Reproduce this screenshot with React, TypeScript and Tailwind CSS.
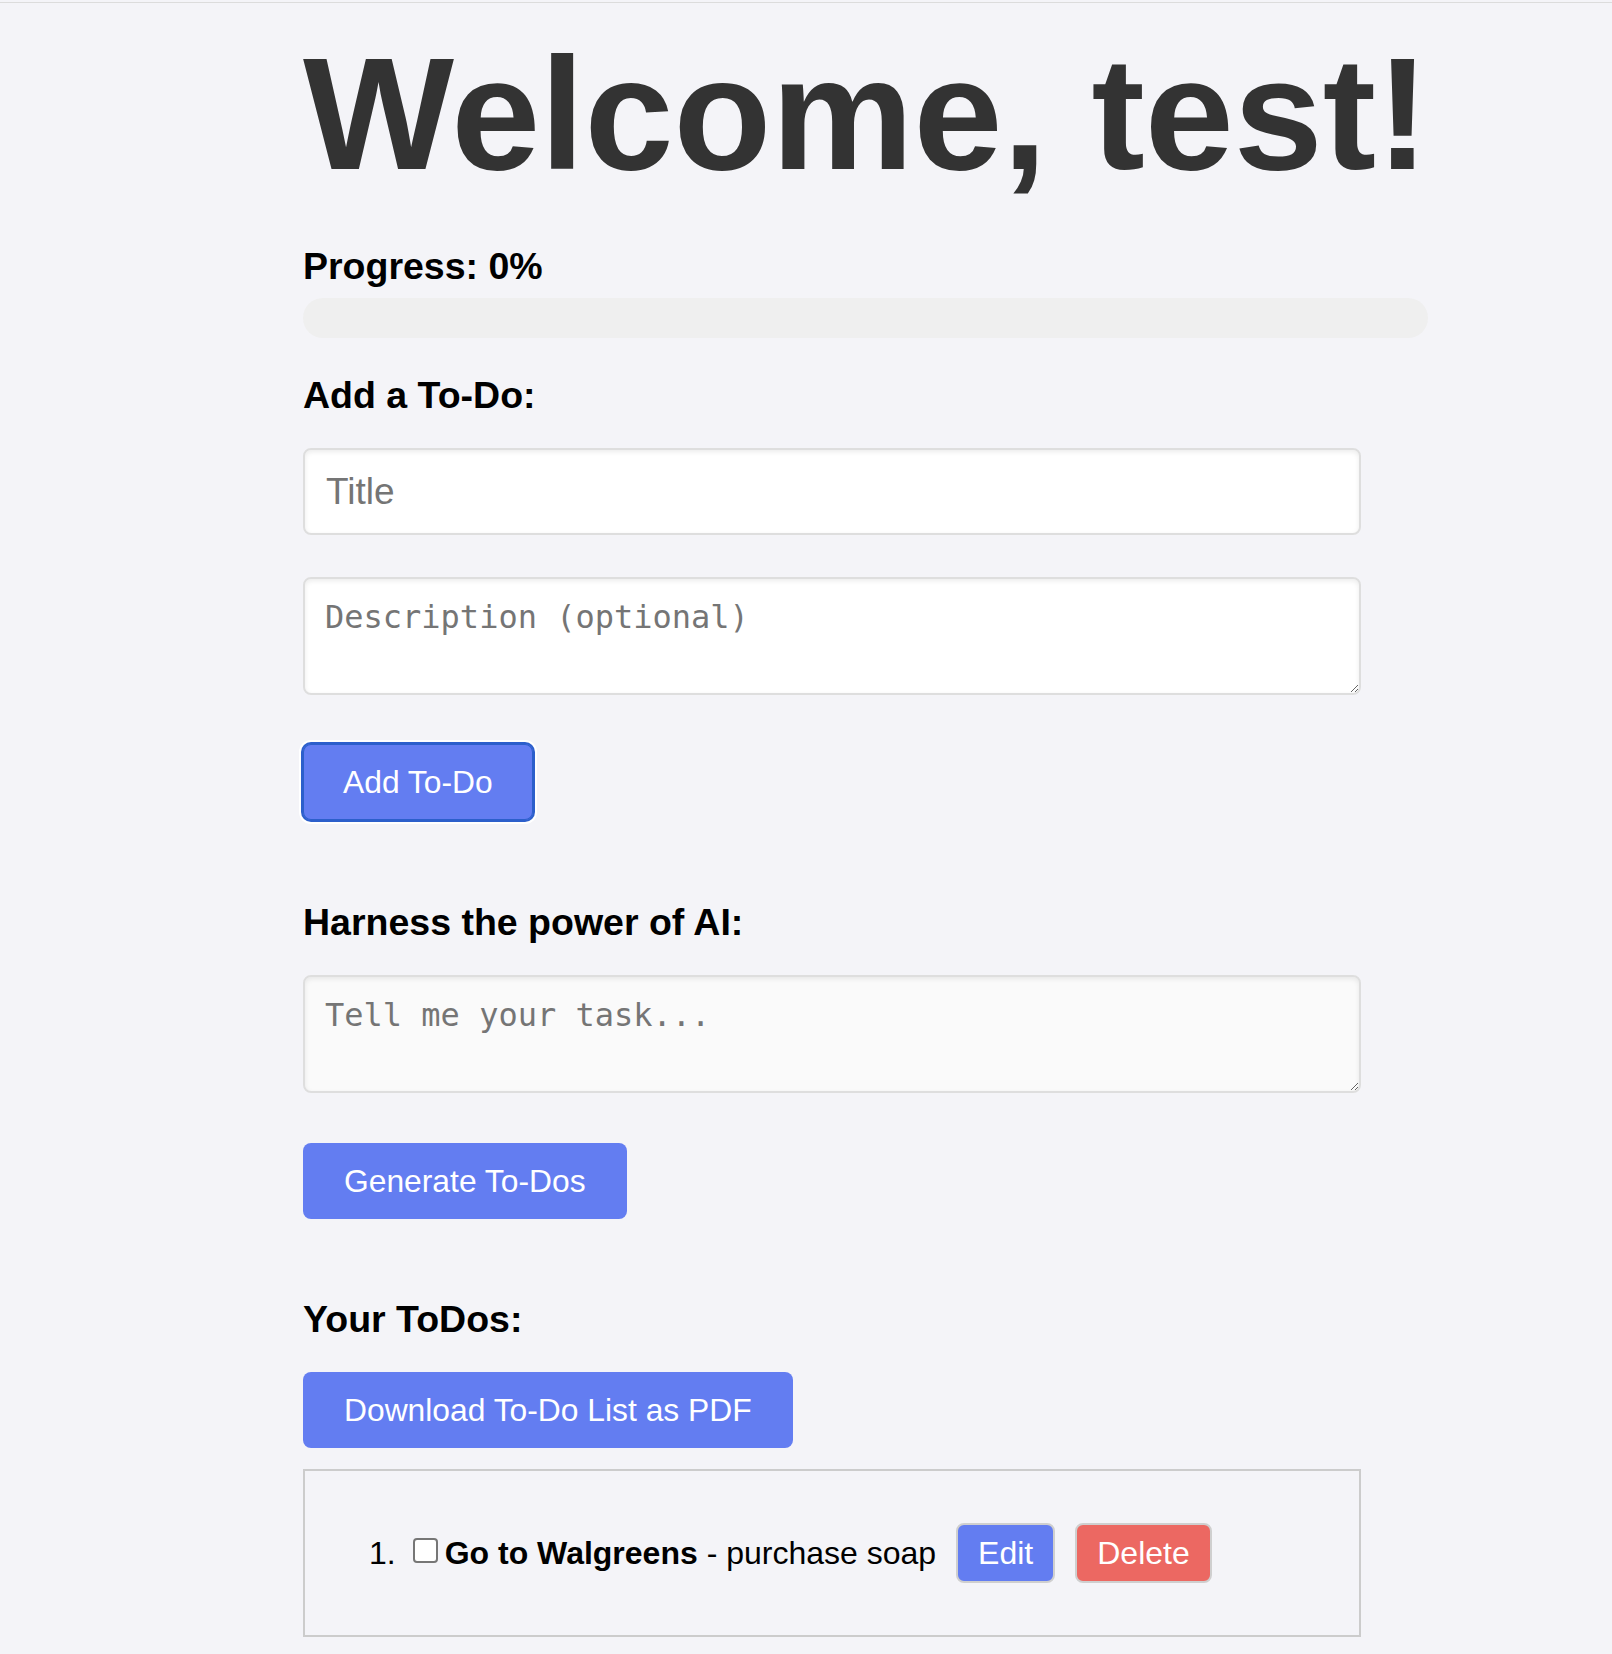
import React from "react";

export default function App() {
  return (
    <div className="min-h-[1654px] bg-[#f4f4f8] text-black [font-family:'Liberation_Sans',Arial,sans-serif]">
      <div className="h-[3px] border-b border-[#dcdcdc] bg-[#f4f4f8]" />
      <div className="mx-auto w-[1006px] pt-[31px]">
        <h1 className="whitespace-nowrap text-[160px] font-bold leading-[160px] text-[#333333]">
          Welcome, test!
        </h1>

        <h2 className="mt-[50px] text-[37.5px] font-bold leading-[44px]">Progress: 0%</h2>
        <div className="mt-[10px] h-[40px] w-[1125px] rounded-full bg-[#efefef]" />

        <h2 className="mt-[35px] text-[37.5px] font-bold leading-[44px]">Add a To-Do:</h2>
        <input
          type="text"
          placeholder="Title"
          className="mt-[31px] block h-[87px] w-[1058px] rounded-[8px] border-2 border-[#dedede] bg-white px-[21px] text-[37px] text-black shadow-[inset_0_2px_5px_rgba(0,0,0,0.08)] outline-none placeholder:text-[#757575]"
        />
        <textarea
          placeholder="Description (optional)"
          className="mt-[42px] block h-[118px] w-[1058px] rounded-[8px] border-2 border-[#dedede] bg-white px-[20px] py-[20px] text-[32px] leading-[36px] text-black shadow-[inset_0_2px_5px_rgba(0,0,0,0.08)] outline-none placeholder:text-[#757575] [font-family:'DejaVu_Sans_Mono',monospace]"
        />
        <button className="mt-[49px] block h-[76px] rounded-[8px] bg-[#637df1] px-[40px] text-[31.8px] leading-[36px] text-white shadow-[inset_0_0_0_1px_#2c5fcb,0_0_0_2px_#2c5fcb,0_0_0_4px_#ffffff]">
          Add To-Do
        </button>

        <h2 className="mt-[80px] text-[37.5px] font-bold leading-[44px]">Harness the power of AI:</h2>
        <textarea
          placeholder="Tell me your task..."
          className="mt-[31px] block h-[118px] w-[1058px] rounded-[8px] border-2 border-[#dedede] bg-[#fafafa] px-[20px] py-[20px] text-[32px] leading-[36px] text-black shadow-[inset_0_2px_5px_rgba(0,0,0,0.08)] outline-none placeholder:text-[#757575] [font-family:'DejaVu_Sans_Mono',monospace]"
        />
        <button className="mt-[50px] block h-[76px] rounded-[8px] bg-[#637df1] px-[41px] text-[31.8px] leading-[36px] text-white">
          Generate To-Dos
        </button>

        <h2 className="mt-[78px] text-[37.5px] font-bold leading-[44px]">Your ToDos:</h2>
        <button className="mt-[31px] block h-[76px] rounded-[8px] bg-[#637df1] px-[41px] text-[31.8px] leading-[36px] text-white">
          Download To-Do List as PDF
        </button>

        <div className="mt-[21px] flex h-[168px] w-[1058px] items-center border-2 border-[#cccccc] pl-[64px]">
          <span className="text-[32px] leading-[36px]">1.</span>
          <input
            type="checkbox"
            className="mb-[5px] ml-[17px] h-[25px] w-[25px] appearance-none rounded-[4px] border-2 border-[#767676] bg-white"
          />
          <span className="ml-[7px] whitespace-nowrap text-[32px] leading-[36px]">
            <strong className="font-bold">Go to Walgreens</strong> - purchase soap
          </span>
          <button className="ml-[20px] h-[60px] rounded-[8px] border-2 border-[#cfcfcf] bg-[#637df1] px-[20px] text-[32px] leading-[36px] text-white">
            Edit
          </button>
          <button className="ml-[20px] h-[60px] rounded-[8px] border-2 border-[#cfcfcf] bg-[#ec6862] px-[20px] text-[32px] leading-[36px] text-white">
            Delete
          </button>
        </div>
      </div>
    </div>
  );
}
